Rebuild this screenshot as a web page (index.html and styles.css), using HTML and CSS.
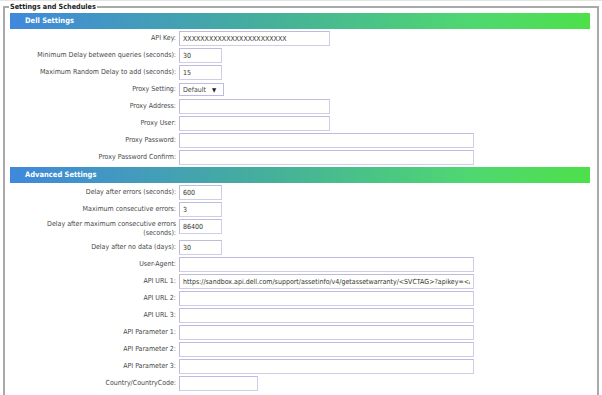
FILE: index.html
```html
<!DOCTYPE html>
<html lang="en">
<head>
  <meta charset="UTF-8">
  <title>Settings and Schedules</title>
  <link rel="stylesheet" href="styles.css">
</head>
<body>

<fieldset class="settings">
  <legend>Settings and Schedules</legend>

  <div class="bar">Dell Settings</div>
  <div class="rows">
    <label>API Key:</label>
    <div><input class="mid" type="text" value="XXXXXXXXXXXXXXXXXXXXXXXX"></div>
    <label>Minimum Delay between queries (seconds):</label>
    <div><input class="short" type="text" value="30"></div>
    <label>Maximum Random Delay to add (seconds):</label>
    <div><input class="short" type="text" value="15"></div>
    <label>Proxy Setting:</label>
    <div><span class="select">Default <span class="arrow">▼</span></span></div>
    <label>Proxy Address:</label>
    <div><input class="mid" type="text"></div>
    <label>Proxy User:</label>
    <div><input class="mid" type="text"></div>
    <label>Proxy Password:</label>
    <div><input class="long" type="text"></div>
    <label>Proxy Password Confirm:</label>
    <div><input class="long" type="text"></div>
  </div>

  <div class="bar">Advanced Settings</div>
  <div class="rows">
    <label>Delay after errors (seconds):</label>
    <div><input class="short" type="text" value="600"></div>
    <label>Maximum consecutive errors:</label>
    <div><input class="short" type="text" value="3"></div>
    <label class="two">Delay after maximum consecutive errors<br>(seconds):</label>
    <div><input class="short" type="text" value="86400"></div>
    <label>Delay after no data (days):</label>
    <div><input class="short" type="text" value="30"></div>
    <label>User-Agent:</label>
    <div><input class="long" type="text"></div>
    <label>API URL 1:</label>
    <div><input class="long" type="text" value="https://sandbox.api.dell.com/support/assetinfo/v4/getassetwarranty/<SVCTAG>?apikey=<APIKEY>"></div>
    <label>API URL 2:</label>
    <div><input class="long" type="text"></div>
    <label>API URL 3:</label>
    <div><input class="long" type="text"></div>
    <label>API Parameter 1:</label>
    <div><input class="long" type="text"></div>
    <label>API Parameter 2:</label>
    <div><input class="long" type="text"></div>
    <label>API Parameter 3:</label>
    <div><input class="long" type="text"></div>
    <label>Country/CountryCode:</label>
    <div><input class="country" type="text"></div>
  </div>
</fieldset>

</body>
</html>
```

FILE: styles.css
```css
* { box-sizing: border-box; }
body { margin:0; padding-top:1px; background:#fff; font-family:"DejaVu Sans Condensed", "DejaVu Sans", sans-serif; font-size:7px; color:#474747; border-top:1px solid #e4e4e4; }
.settings { margin:0 3px; padding:2px 7px 0 5px; border:2px solid #a9a9a9; border-bottom:none; min-height:420px; }
.settings legend { padding:0 1px; margin-left:-1px; font-weight:bold; font-size:7.2px; color:#222; }
.bar { height:16px; line-height:16px; padding-left:15px; color:#fff; font-weight:bold; font-size:7.5px;
  background:linear-gradient(to right,#4088dc 0%,#45b09a 45%,#4fd870 80%,#4ee04a 100%); }
.rows { display:grid; grid-template-columns:166px 1fr; column-gap:3px; row-gap:2px; padding:2px 0 2px; }
.rows label { text-align:right; align-self:center; line-height:9px; }
.rows label.two { align-self:start; padding-top:1px; }
.rows div { height:15px; }
input { height:15px; padding:0 3px; border:1px solid #cfcde8; border-top-color:#bdbbe0; border-left-color:#bdbbe0;
  background:#fffffd; font-family:inherit; font-size:7px; color:#333; outline:none; }
input.short { width:43px; }
input.mid { width:151px; }
input.long { width:295px; }
input.country { width:79px; }
.select { display:inline-flex; align-items:center; height:13px; margin-top:1px; padding:0 3px; border:1px solid #bdbbe0; gap:6px; width:45px; background:#fff; }
.select .arrow { font-size:6px; color:#222; }
```
